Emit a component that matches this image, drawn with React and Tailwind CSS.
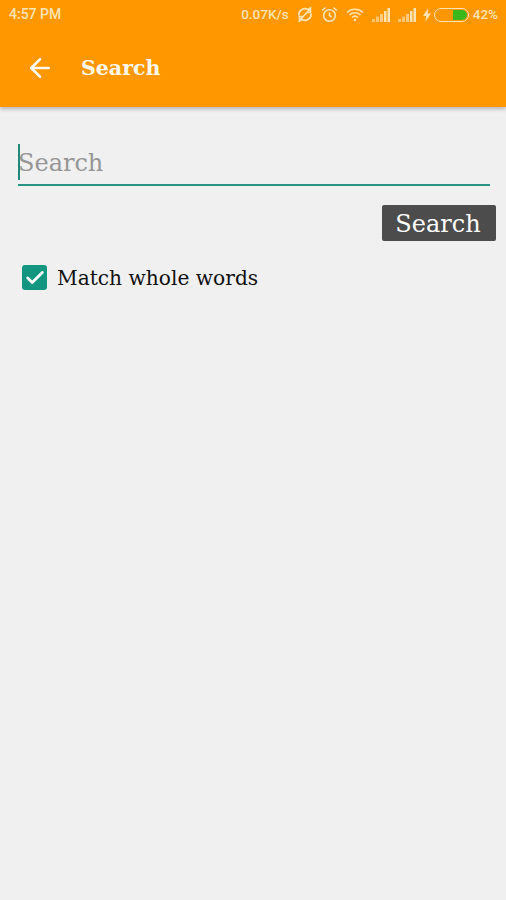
import { ArrowLeft, Check } from "lucide-react";

const slab = "font-['DejaVu_Serif',serif]";

function Signal({ className }) {
  return (
    <svg width="18" height="14" viewBox="0 0 18 14" fill="currentColor" className={className}>
      <rect x="0" y="11" width="3" height="3" opacity="0.6" />
      <rect x="4" y="8.5" width="3" height="5.5" opacity="0.6" />
      <rect x="8" y="6" width="3" height="8" opacity="0.7" />
      <rect x="12" y="3" width="2.5" height="11" />
      <rect x="15.5" y="0" width="2.5" height="14" />
    </svg>
  );
}

function StatusIcons() {
  return (
    <div className="flex items-center text-[#ffe3b3]">
      {/* no sync */}
      <svg width="18" height="17" viewBox="0 0 18 17" fill="none" stroke="currentColor" strokeWidth="1.7" className="ml-[7px]">
        <path d="M3 9.5a6 6 0 0 1 9-6l2.5-1.500v4.500h-4M15 7.500a6 6 0 0 1-9 6l-2.500 1.500v-4.500h4M3 15L15 2" />
      </svg>
      {/* alarm */}
      <svg width="17" height="17" viewBox="0 0 17 17" fill="none" stroke="currentColor" strokeWidth="1.6" className="ml-[7px]">
        <circle cx="8.500" cy="9.500" r="5.800" />
        <path d="M8.500 6.500v3l2 1.500M1 4.500l3.500-3M16 4.500l-3.500-3" />
      </svg>
      {/* wifi */}
      <svg width="18" height="14" viewBox="0 0 18 14" fill="none" stroke="currentColor" strokeWidth="1.6" className="ml-[8px]">
        <path d="M1 4.500a11.500 11.500 0 0 1 16 0M3.500 7a8 8 0 0 1 11 0M6 9.500a4.500 4.500 0 0 1 6 0" />
        <circle cx="9" cy="12" r="1.200" fill="currentColor" stroke="none" />
      </svg>
      <Signal className="ml-[8px]" />
      <Signal className="ml-[8px]" />
      {/* charging bolt */}
      <svg width="8" height="14" viewBox="0 0 8 13" fill="currentColor" className="ml-[7px]">
        <path d="M5 0L0 7.500h3L2.500 13 8 5H4.800z" />
      </svg>
      {/* battery */}
      <div className="ml-[3px] flex h-[14px] w-[35px] items-center justify-end rounded-full border border-[#ffe3b3] pr-[1px]">
        <div className="h-[10px] w-[14px] rounded-r-full bg-[#3cb81c]" />
      </div>
    </div>
  );
}

export default function App() {
  return (
    <div className="flex min-h-[900px] flex-col bg-[#f0f0f0]">
      <header className="h-[107px] bg-[#ff9800] shadow-[0_2px_4px_rgba(0,0,0,0.25)]">
        <div className="flex h-[29px] items-center justify-between pl-[9px] pr-[8px] font-['Roboto',sans-serif] font-medium text-[#ffe3b3]">
          <span className="text-[14px]">4:57 PM</span>
          <div className="flex items-center text-[13.500px]">
            <span>0.07K/s</span>
            <StatusIcons />
            <span className="ml-[4px]">42%</span>
          </div>
        </div>
        <div className="flex h-[78px] items-center pl-[25px]">
          <ArrowLeft size={30} strokeWidth={2} className="text-[#fff8ee]" />
          <h1 className={`ml-[26px] mt-[1px] text-[20.500px] font-bold text-[#fff8ee] ${slab}`}>Search</h1>
        </div>
      </header>

      <main className={`flex flex-col ${slab}`}>
        <div className="mt-[37px] ml-[18px] mr-[16px] flex h-[42px] border-b-2 border-[#2a9484]">
          <div className="h-[36px] w-[2px] bg-[#1f8a7a]" />
          <span className="-ml-[2px] mt-[7px] text-[24px] leading-none text-[#969696]">Search</span>
        </div>
        <div className="mt-[19px] flex justify-end pr-[10px]">
          <button className="flex h-[36px] w-[114px] items-center justify-center rounded-[2px] bg-[#4c4c4c] pr-[2px] pt-[1px] text-[24px] leading-none text-white">
            Search
          </button>
        </div>
        <label className="mt-[24px] ml-[22px] flex items-center">
          <span className="flex h-[25px] w-[25px] items-center justify-center rounded-[3px] bg-[#12967f]">
            <Check size={22} strokeWidth={3} className="text-white" />
          </span>
          <span className="ml-[10px] mt-[1px] text-[20.200px] leading-none text-[#111111]">Match whole words</span>
        </label>
      </main>
    </div>
  );
}
